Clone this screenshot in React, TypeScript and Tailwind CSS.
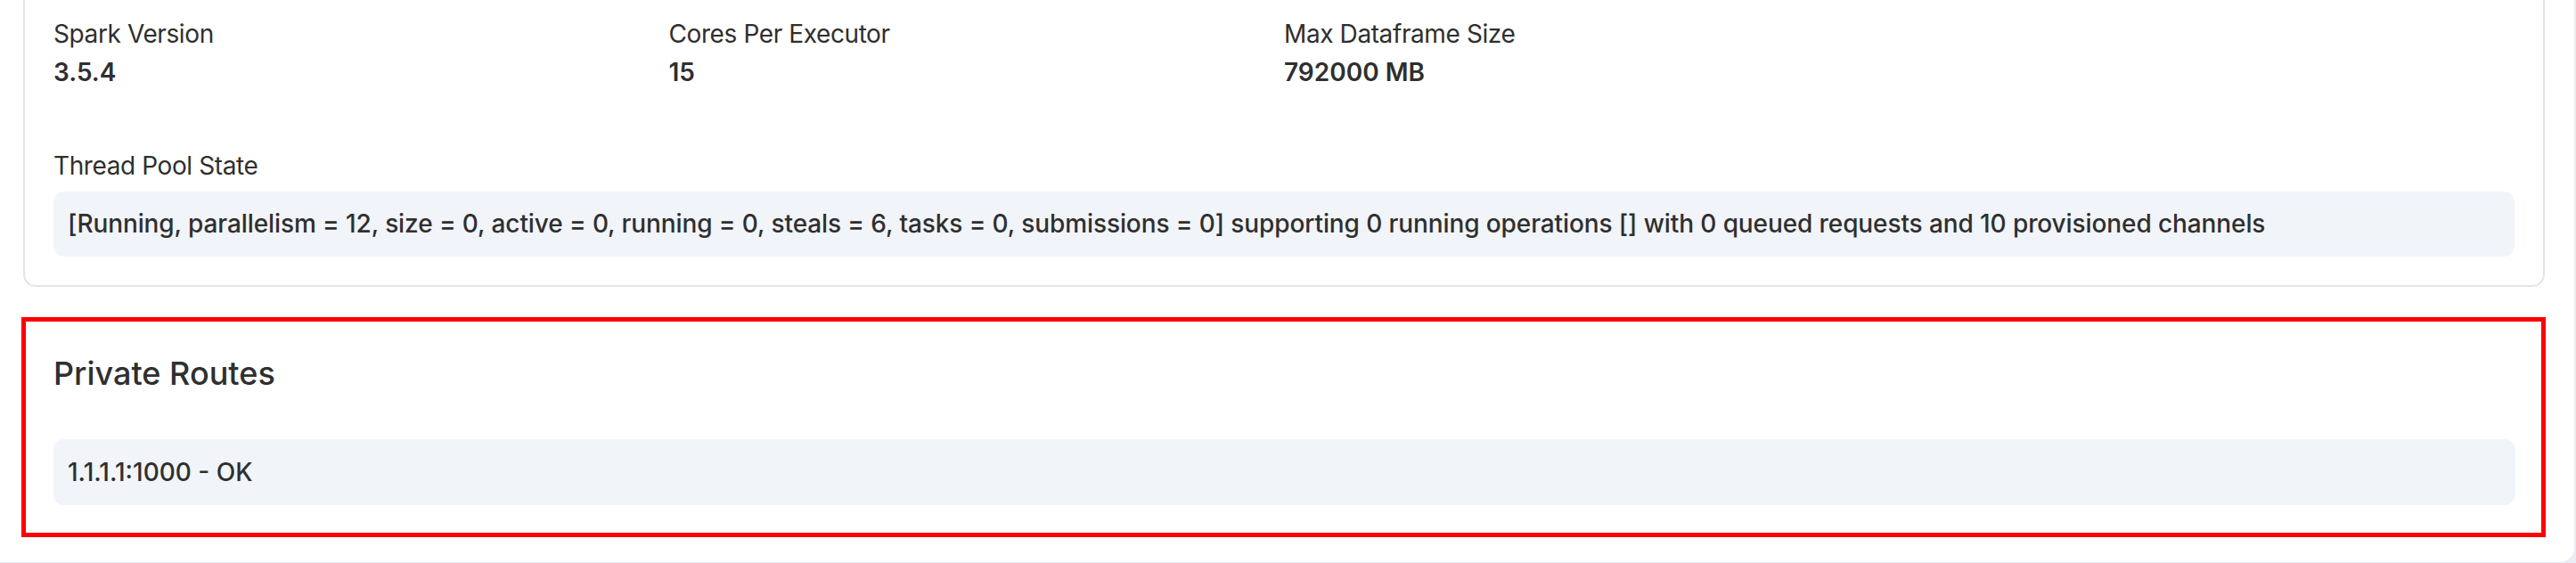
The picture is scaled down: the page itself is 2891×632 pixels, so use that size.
import React from 'react';

const stats = [
  { label: 'Spark Version', value: '3.5.4' },
  { label: 'Cores Per Executor', value: '15' },
  { label: 'Max Dataframe Size', value: '792000 MB' },
];

const threadPoolState =
  '[Running, parallelism = 12, size = 0, active = 0, running = 0, steals = 6, tasks = 0, submissions = 0] supporting 0 running operations [] with 0 queued requests and 10 provisioned channels';

const routes = ['1.1.1.1:1000 - OK'];

export default function App() {
  return (
    <div className="h-[632px] w-full overflow-hidden bg-[#e9eef4] font-['Inter','Liberation_Sans',sans-serif] text-[#2f2f2f]">
      <div className="h-[631px] w-[2889px] overflow-hidden rounded-br-[16px] bg-white">
        <div className="-mt-[16px] flex flex-col gap-[34px] pl-[26px] pr-[33px]">
          {/* cluster info card */}
          <section className="rounded-[14px] border-2 border-[#e5e5e5] p-[32px]">
            <div className="grid grid-cols-4">
              {stats.map((s) => (
                <div key={s.label} className="flex flex-col gap-[3px]">
                  <span className="text-[28px] leading-[40px] tracking-[-0.4px]">{s.label}</span>
                  <span className="text-[28px] font-semibold leading-[40px]">{s.value}</span>
                </div>
              ))}
            </div>
            <div className="mt-[65px] text-[28px] leading-[40px] tracking-[-0.4px]">Thread Pool State</div>
            <div className="mt-[9px] rounded-[12px] bg-[#f1f4f9] px-[16px] py-[16px] text-[28px] font-medium leading-[41px] tracking-[-0.1px]">
              {threadPoolState}
            </div>
          </section>

          {/* private routes card, highlighted */}
          <section className="-ml-[2px] -mr-[1px] border-[5px] border-[#ff0000] pb-[31px] pl-[31px] pr-[29px] pt-[30px]">
            <h2 className="text-[36px] font-medium leading-[56px]">Private Routes</h2>
            <div className="mt-[46px] flex flex-col gap-2">
              {routes.map((r) => (
                <div key={r} className="rounded-[12px] bg-[#f1f4f9] px-[16px] py-[16px] text-[28px] font-medium leading-[42px]">
                  {r}
                </div>
              ))}
            </div>
          </section>
        </div>
      </div>
    </div>
  );
}
